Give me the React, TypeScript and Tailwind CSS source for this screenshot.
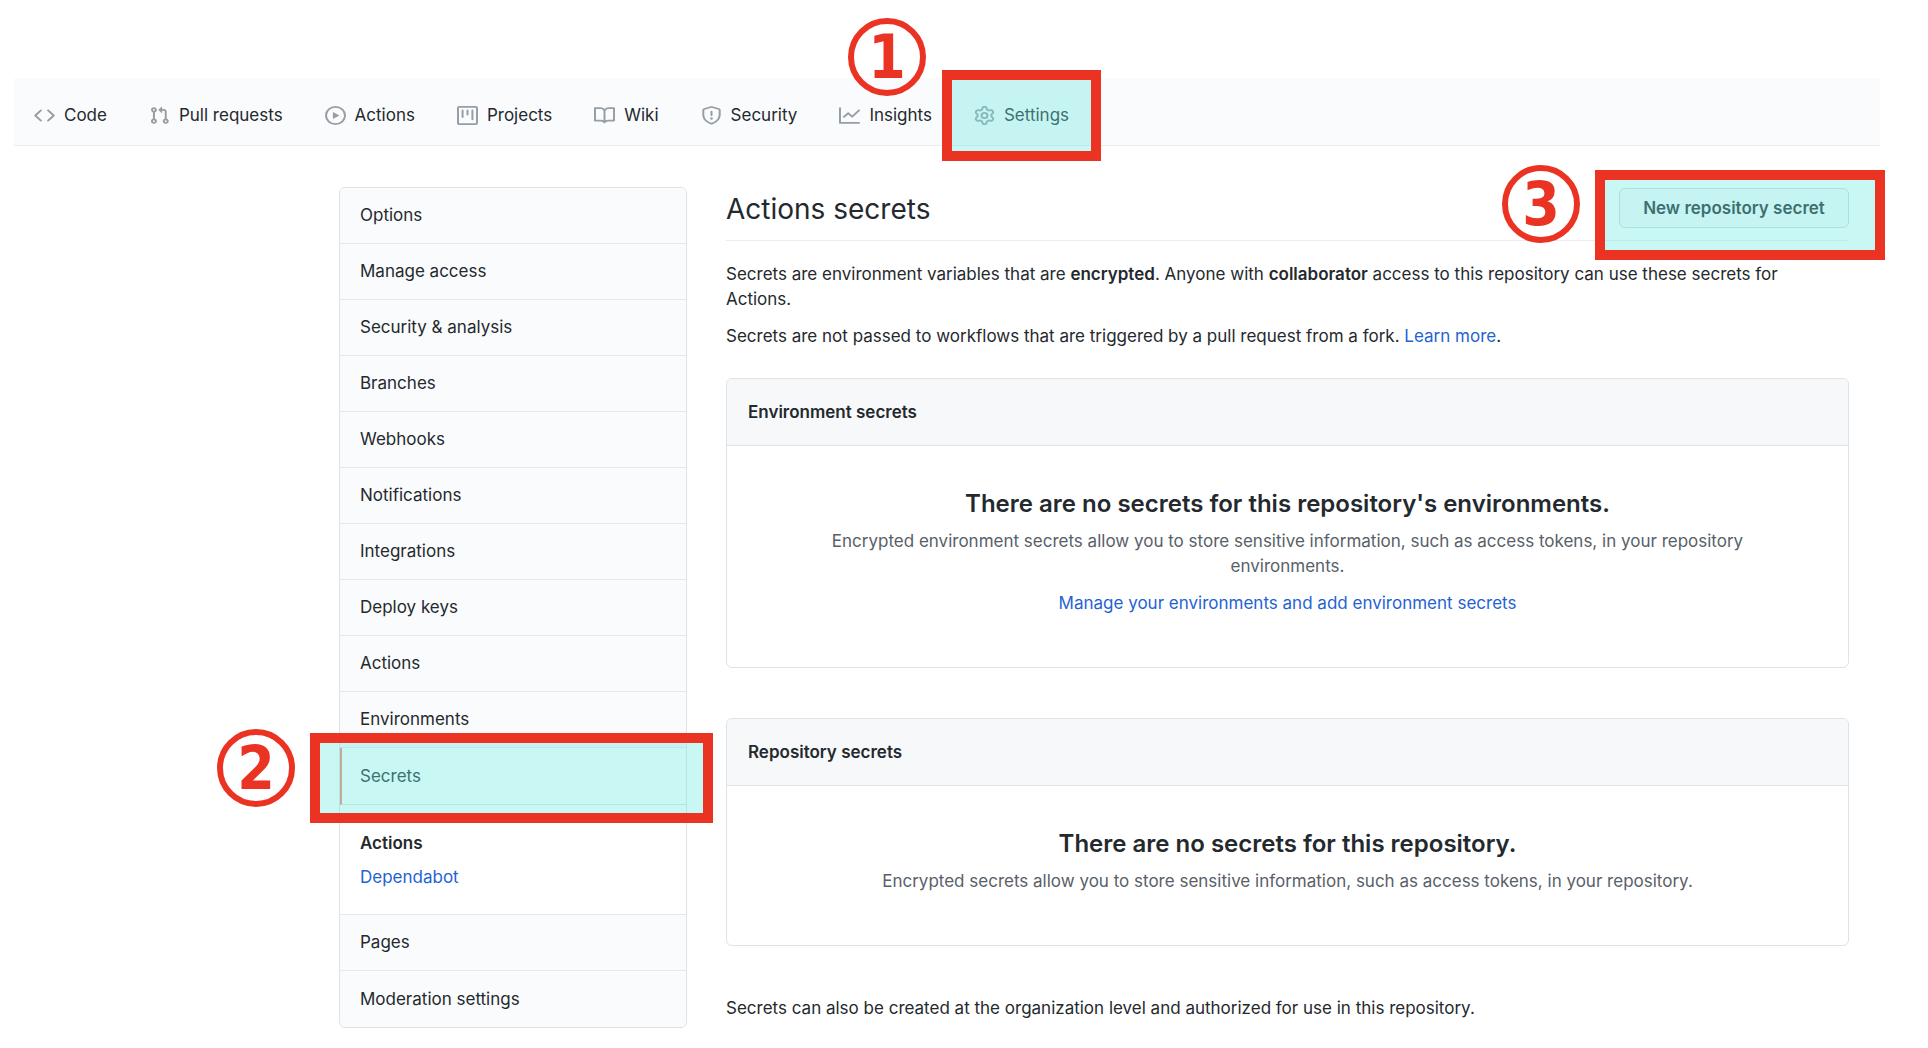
import React from 'react';

type NavItem = {
  label: string;
  path: string;
  marked?: boolean;
};

const navItems: NavItem[] = [
  {
    label: 'Code',
    path: 'M4.72 3.22a.75.75 0 011.06 1.06L2.06 8l3.72 3.72a.75.75 0 11-1.06 1.06L.47 8.53a.75.75 0 010-1.06l4.25-4.25zm6.56 0a.75.75 0 10-1.06 1.06L13.94 8l-3.72 3.72a.75.75 0 101.06 1.06l4.25-4.25a.75.75 0 000-1.06l-4.25-4.25z',
  },
  {
    label: 'Pull requests',
    path: 'M7.177 3.073L9.573.677A.25.25 0 0110 .854v4.792a.25.25 0 01-.427.177L7.177 3.427a.25.25 0 010-.354zM3.75 2.5a.75.75 0 100 1.5.75.75 0 000-1.5zm-2.25.75a2.25 2.25 0 113 2.122v5.256a2.251 2.251 0 11-1.5 0V5.372A2.25 2.25 0 011.5 3.25zM11 2.5h-1V4h1a1 1 0 011 1v5.628a2.251 2.251 0 101.5 0V5A2.5 2.5 0 0011 2.5zm1 10.25a.75.75 0 111.5 0 .75.75 0 01-1.5 0zM3.75 12a.75.75 0 100 1.5.75.75 0 000-1.5z',
  },
  {
    label: 'Actions',
    path: 'M1.5 8a6.5 6.5 0 1113 0 6.5 6.5 0 01-13 0zM8 0a8 8 0 100 16A8 8 0 008 0zM6.379 5.227A.25.25 0 006 5.442v5.117a.25.25 0 00.379.214l4.264-2.559a.25.25 0 000-.428L6.379 5.227z',
  },
  {
    label: 'Projects',
    path: 'M1.75 0A1.75 1.75 0 000 1.75v12.5C0 15.216.784 16 1.75 16h12.5A1.75 1.75 0 0016 14.25V1.75A1.75 1.75 0 0014.25 0H1.75zM1.5 1.75a.25.25 0 01.25-.25h12.5a.25.25 0 01.25.25v12.5a.25.25 0 01-.25.25H1.75a.25.25 0 01-.25-.25V1.75zM11.75 3a.75.75 0 00-.75.75v7.5a.75.75 0 001.5 0v-7.5a.75.75 0 00-.75-.75zm-8.25.75a.75.75 0 011.5 0v5.5a.75.75 0 01-1.5 0v-5.5zM8 3a.75.75 0 00-.75.75v3.5a.75.75 0 001.5 0v-3.5A.75.75 0 008 3z',
  },
  {
    label: 'Wiki',
    path: 'M0 1.75A.75.75 0 01.75 1h4.253c1.227 0 2.317.59 3 1.501A3.744 3.744 0 0111.006 1h4.245a.75.75 0 01.75.75v10.5a.75.75 0 01-.75.75h-4.507a2.25 2.25 0 00-1.591.659l-.622.621a.75.75 0 01-1.06 0l-.622-.621A2.25 2.25 0 005.258 13H.75a.75.75 0 01-.75-.75V1.75zm8.755 3a2.25 2.25 0 012.25-2.25H14.5v9h-3.757c-.71 0-1.4.201-1.992.572l.004-7.322zm-1.504 7.324l.004-5.073-.002-2.253A2.25 2.25 0 005.003 2.5H1.5v9h3.757a3.75 3.75 0 011.994.574z',
  },
  {
    label: 'Security',
    path: 'M7.467.133a1.75 1.75 0 011.066 0l5.25 1.68A1.75 1.75 0 0115 3.48V7c0 1.566-.32 3.182-1.303 4.682-.983 1.498-2.585 2.813-5.032 3.855a1.7 1.7 0 01-1.33 0c-2.447-1.042-4.049-2.357-5.032-3.855C1.32 10.182 1 8.566 1 7V3.48a1.75 1.75 0 011.217-1.667l5.25-1.68zm.61 1.429a.25.25 0 00-.153 0l-5.25 1.68a.25.25 0 00-.174.238V7c0 1.358.275 2.666 1.057 3.86.784 1.194 2.121 2.34 4.366 3.297a.2.2 0 00.154 0c2.245-.956 3.582-2.104 4.366-3.298C13.225 9.666 13.5 8.36 13.5 7V3.48a.25.25 0 00-.174-.237l-5.25-1.68zM9 10.5a1 1 0 11-2 0 1 1 0 012 0zm-.25-5.75a.75.75 0 10-1.5 0v3a.75.75 0 001.5 0v-3z',
  },
  {
    label: 'Insights',
    path: 'M1.5 1.75a.75.75 0 00-1.5 0v12.5c0 .414.336.75.75.75h14.5a.75.75 0 000-1.5H1.5V1.75zm14.28 2.53a.75.75 0 00-1.06-1.06L10 7.94 7.53 5.47a.75.75 0 00-1.06 0L3.22 8.72a.75.75 0 001.06 1.06L7 7.06l2.47 2.47a.75.75 0 001.06 0l5.25-5.25z',
  },
  {
    label: 'Settings',
    marked: true,
    path: 'M7.429 1.525a6.593 6.593 0 011.142 0c.036.003.108.036.137.146l.289 1.105c.147.56.55.967.997 1.189.174.086.341.183.501.29.417.278.97.423 1.53.27l1.102-.303c.11-.03.175.016.195.046.219.31.41.641.573.989.014.031.022.11-.059.19l-.815.806c-.411.406-.562.957-.53 1.456a4.588 4.588 0 010 .582c-.032.499.119 1.05.53 1.456l.815.806c.08.08.073.159.059.19a6.494 6.494 0 01-.573.99c-.02.029-.086.074-.195.045l-1.103-.303c-.559-.153-1.112-.008-1.529.27-.16.107-.327.204-.5.29-.449.222-.851.628-.998 1.189l-.289 1.105c-.029.11-.101.143-.137.146a6.613 6.613 0 01-1.142 0c-.036-.003-.108-.037-.137-.146l-.289-1.105c-.147-.56-.55-.967-.997-1.189a4.502 4.502 0 01-.501-.29c-.417-.278-.97-.423-1.53-.27l-1.102.303c-.11.03-.175-.016-.195-.046a6.492 6.492 0 01-.573-.989c-.014-.031-.022-.11.059-.19l.815-.806c.411-.406.562-.957.53-1.456a4.587 4.587 0 010-.582c.032-.499-.119-1.05-.53-1.456l-.815-.806c-.08-.08-.073-.159-.059-.19a6.44 6.44 0 01.573-.99c.02-.029.086-.075.195-.045l1.103.303c.559.153 1.112.008 1.529-.27.16-.107.327-.204.5-.29.449-.222.851-.628.998-1.189l.289-1.105c.029-.11.101-.143.137-.146zM8 0c-.236 0-.47.01-.701.03-.743.065-1.29.615-1.458 1.261l-.29 1.106c-.017.066-.078.158-.211.224a5.994 5.994 0 00-.668.386c-.123.082-.233.09-.3.071L3.27 2.776c-.644-.177-1.392.02-1.82.63a7.977 7.977 0 00-.704 1.217c-.315.675-.111 1.422.363 1.891l.815.806c.05.048.098.147.088.294a6.084 6.084 0 000 .772c.01.147-.038.246-.088.294l-.815.806c-.474.469-.678 1.216-.363 1.891.2.428.436.835.704 1.218.428.609 1.176.806 1.82.63l1.103-.303c.066-.019.176-.011.299.071.213.143.436.272.668.386.133.066.194.158.212.224l.289 1.106c.169.646.715 1.196 1.458 1.26a8.094 8.094 0 001.402 0c.743-.064 1.29-.614 1.458-1.26l.29-1.106c.017-.066.078-.158.211-.224a5.98 5.98 0 00.668-.386c.123-.082.233-.09.3-.071l1.102.302c.644.177 1.392-.02 1.82-.63.268-.382.505-.789.704-1.217.315-.675.111-1.422-.364-1.891l-.814-.806c-.05-.048-.098-.147-.088-.294a6.1 6.1 0 000-.772c-.01-.147.039-.246.088-.294l.814-.806c.475-.469.679-1.216.364-1.891a7.992 7.992 0 00-.704-1.218c-.428-.609-1.176-.806-1.82-.63l-1.103.303c-.066.019-.176.011-.299-.071a5.991 5.991 0 00-.668-.386c-.133-.066-.194-.158-.212-.224L10.16 1.29C9.99.645 9.444.095 8.701.031A8.094 8.094 0 008 0zm1.5 8a1.5 1.5 0 11-3 0 1.5 1.5 0 013 0zM11 8a3 3 0 11-6 0 3 3 0 016 0z',
  },
];

const menuItems = [
  'Options',
  'Manage access',
  'Security & analysis',
  'Branches',
  'Webhooks',
  'Notifications',
  'Integrations',
  'Deploy keys',
  'Actions',
  'Environments',
];

const menuRow = 'flex h-14 items-center border-b border-[#e6e8eb] bg-[#fafbfc] px-5';

// Red frame with a numbered circle, laid over the control of each step
const StepMarker: React.FC<{ step: number; frame: string; circle: string }> = ({ step, frame, circle }) => (
  <>
    <span
      className={`pointer-events-none absolute z-10 border-[10px] border-[#eb3324] bg-[#6de9e2]/37 bg-clip-padding ${frame}`}
    />
    <span
      className={`pointer-events-none absolute z-10 flex size-[78px] items-center justify-center rounded-full border-[6px] border-[#eb3324] font-['DejaVu_Sans_Condensed','DejaVu_Sans',sans-serif] text-[60px] leading-none font-bold text-[#eb3324] ${circle}`}
    >
      {step}
    </span>
  </>
);

const SecretsBox: React.FC<{ title: string; heading: string; children: React.ReactNode }> = ({
  title,
  heading,
  children,
}) => (
  <section className="rounded-md border border-[#dfe2e6]">
    <h3 className="flex h-[67px] items-center rounded-t-md border-b border-[#dfe2e6] bg-[#f6f8fa] px-[21px] font-semibold">
      {title}
    </h3>
    <div className="px-10 pt-10 pb-[51px] text-center">
      <h4 className="mb-[7px] text-2xl leading-9 font-semibold">{heading}</h4>
      {children}
    </div>
  </section>
);

const App: React.FC = () => {
  return (
    <div className="bg-white pt-[78px] pb-5 font-['Inter','Liberation_Sans',sans-serif] text-[17px] leading-[25px] text-[#24292e]">
      <nav className="mr-12 ml-3.5 flex h-[68px] items-center gap-[42px] border-b border-[#eaecef] bg-[#fafbfc] px-5 pt-2">
        {navItems.map((item) => (
          <a key={item.label} href="#" className="relative flex items-center gap-[9px] whitespace-nowrap">
            <svg
              viewBox="0 0 16 16"
              preserveAspectRatio="none"
              className="h-[19px] w-[21px] shrink-0 fill-[#959da5]"
              aria-hidden="true"
            >
              <path fillRule="evenodd" d={item.path} />
            </svg>
            {item.label}
            {item.marked && (
              <StepMarker step={1} frame="-top-[33px] -left-8 h-[91px] w-[159px]" circle="-top-[85px] -left-[126px]" />
            )}
          </a>
        ))}
      </nav>

      <div className="mt-[41px] mr-[79px] ml-[339px] flex items-start gap-[39px]">
        <aside className="w-[348px] shrink-0 rounded-md border border-[#dfe2e6]">
          {menuItems.map((item) => (
            <a key={item} href="#" className={`${menuRow} first:rounded-t-md`}>
              {item}
            </a>
          ))}
          <a
            href="#"
            className="relative flex h-[57px] items-center border-b border-l-2 border-b-[#dfe2e6] border-l-[#f9826c] bg-white px-[18px]"
          >
            Secrets
            <StepMarker
              step={2}
              frame="-top-[15px] -left-8 h-[90px] w-[403px]"
              circle="-top-[19px] -left-[125px]"
            />
          </a>
          <div className="flex flex-col gap-[9px] border-b border-[#e6e8eb] px-5 pt-[26px] pb-6">
            <a href="#" className="font-semibold">
              Actions
            </a>
            <a href="#" className="text-[#1f63d3]">
              Dependabot
            </a>
          </div>
          <a href="#" className={menuRow}>
            Pages
          </a>
          <a href="#" className="flex h-14 items-center rounded-b-md bg-[#fafbfc] px-5">
            Moderation settings
          </a>
        </aside>

        <main className="min-w-0 flex-1">
          <header className="mb-[21px] flex h-[54px] items-start justify-between border-b border-[#eaecef]">
            <h2 className="text-[28px] leading-[44px]">Actions secrets</h2>
            <div className="relative">
              <button
                type="button"
                className="mt-px h-10 w-[230px] rounded-md border border-[#d5d8da] bg-[#fafbfc] font-semibold"
              >
                New repository secret
              </button>
              <StepMarker
                step={3}
                frame="-top-[17px] -right-9 h-[90px] w-[290px]"
                circle="-top-[22px] -left-[117px]"
              />
            </div>
          </header>

          <p className="mb-3 pr-6">
            Secrets are environment variables that are <strong className="font-semibold">encrypted</strong>. Anyone with{' '}
            <strong className="font-semibold">collaborator</strong> access to this repository can use these secrets for
            Actions.
          </p>
          <p className="mb-[29px]">
            Secrets are not passed to workflows that are triggered by a pull request from a fork.{' '}
            <a href="#" className="text-[#1f63d3]">
              Learn more
            </a>
            .
          </p>

          <div className="flex flex-col gap-[50px]">
            <SecretsBox title="Environment secrets" heading="There are no secrets for this repository's environments.">
              <p className="mx-auto mb-3 max-w-[960px] text-[#586069]">
                Encrypted environment secrets allow you to store sensitive information, such as access tokens, in your
                repository environments.
              </p>
              <a href="#" className="text-[#1f63d3]">
                Manage your environments and add environment secrets
              </a>
            </SecretsBox>

            <SecretsBox title="Repository secrets" heading="There are no secrets for this repository.">
              <p className="text-[#586069]">
                Encrypted secrets allow you to store sensitive information, such as access tokens, in your repository.
              </p>
            </SecretsBox>
          </div>

          <p className="mt-[50px]">
            Secrets can also be created at the organization level and authorized for use in this repository.
          </p>
        </main>
      </div>
    </div>
  );
};

export default App;
